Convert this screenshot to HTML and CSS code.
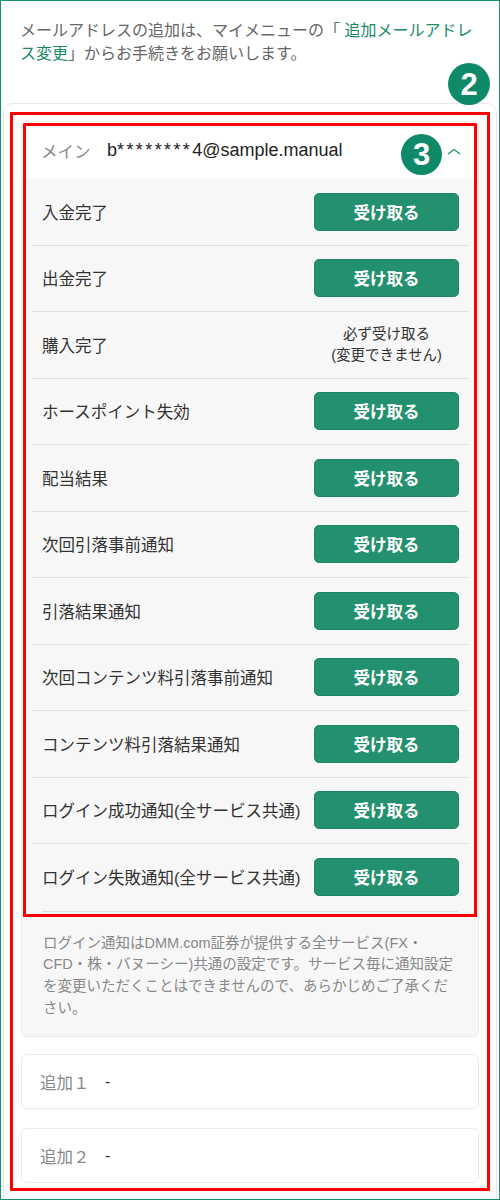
FILE: index.html
```html
<!DOCTYPE html>
<html lang="ja">
<head>
<meta charset="utf-8">
<title>メール通知設定</title>
<link rel="stylesheet" href="styles.css">
</head>
<body>
<div class="page">
  <p class="intro">メールアドレスの追加は、マイメニューの「 <a class="link" href="#">追加メールアドレス変更</a>」からお手続きをお願いします。</p>
  <div class="card">
    <span class="badge badge-2">2</span>
    <div class="frame">
      <div class="acc">
        <div class="acc-main">
          <div class="acc-head">
            <span class="acc-label">メイン</span>
            <span class="acc-mail">b<span class="stars">********</span>4@sample.manual</span>
            <span class="badge badge-3">3</span>
            <svg class="chevron" width="14" height="7" viewBox="0 0 14 7"><polyline points="1,6 7,1.5 13,6" fill="none" stroke="#1f8f6f" stroke-width="1.2"/></svg>
          </div>
          <ul class="rows">
            <li class="row"><span class="row-label">入金完了</span><span class="btn">受け取る</span></li>
            <li class="row"><span class="row-label">出金完了</span><span class="btn">受け取る</span></li>
            <li class="row"><span class="row-label">購入完了</span><span class="fixed">必ず受け取る<br>(変更できません)</span></li>
            <li class="row"><span class="row-label">ホースポイント失効</span><span class="btn">受け取る</span></li>
            <li class="row"><span class="row-label">配当結果</span><span class="btn">受け取る</span></li>
            <li class="row"><span class="row-label">次回引落事前通知</span><span class="btn">受け取る</span></li>
            <li class="row"><span class="row-label">引落結果通知</span><span class="btn">受け取る</span></li>
            <li class="row"><span class="row-label">次回コンテンツ料引落事前通知</span><span class="btn">受け取る</span></li>
            <li class="row"><span class="row-label">コンテンツ料引落結果通知</span><span class="btn">受け取る</span></li>
            <li class="row"><span class="row-label">ログイン成功通知(全サービス共通)</span><span class="btn">受け取る</span></li>
            <li class="row"><span class="row-label">ログイン失敗通知(全サービス共通)</span><span class="btn">受け取る</span></li>
          </ul>
        </div>
        <p class="note">ログイン通知はDMM.com証券が提供する全サービス(FX・CFD・株・バヌーシー)共通の設定です。サービス毎に通知設定を変更いただくことはできませんので、あらかじめご了承ください。</p>
      </div>
      <div class="sub"><span class="acc-label sub-label">追加１</span><span class="sub-value">-</span></div>
      <div class="sub sub-2"><span class="acc-label sub-label">追加２</span><span class="sub-value">-</span></div>
    </div>
  </div>
</div>
</body>
</html>
```

FILE: styles.css
```css
* { box-sizing: border-box; }

body {
  margin: 0;
  font-family: "Liberation Sans", "Noto Sans CJK JP", sans-serif;
  background: #fff;
}

.page {
  width: 500px;
  height: 1200px;
  border: 1px solid #12906f;
  overflow: hidden;
  background: #fff;
}

.intro {
  margin: 0;
  padding: 19px 19px 0;
  font-size: 16px;
  line-height: 22.5px;
  color: #666;
}

.link {
  color: #1a8a6a;
  text-decoration: none;
}

.card {
  position: relative;
  margin: 38px 2px 0;
  border: 1px solid #e8e8e8;
  border-radius: 10px;
  padding: 8px 6px 20px;
  background: #fff;
}

.badge {
  position: absolute;
  z-index: 3;
  display: flex;
  align-items: center;
  justify-content: center;
  width: 42px;
  height: 42px;
  border-radius: 50%;
  background: #0f8a68;
  color: #fff;
  font-family: "Liberation Sans", sans-serif;
  font-weight: bold;
  font-size: 31px;
  line-height: 1;
}

.badge-2 {
  top: -41px;
  right: 6px;
}

.badge-3 {
  top: 12px;
  left: 379px;
  width: 41px;
  height: 41px;
}

.frame {
  border: 3px solid #ff0000;
  padding: 6px 8px 5px;
}

.acc {
  border: 1px solid #ebebeb;
  border-radius: 6px;
  overflow: hidden;
  background: #f7f7f7;
}

.acc-main {
  position: relative;
}

.acc-main::after {
  content: "";
  position: absolute;
  left: 1px;
  right: 1px;
  top: 1px;
  bottom: -6px;
  border: 3px solid #ff0000;
  pointer-events: none;
  z-index: 2;
}

.acc-head {
  position: relative;
  display: flex;
  align-items: center;
  height: 57px;
  padding: 0 17px 0 19px;
  background: #fff;
}

.acc-label {
  width: 66px;
  flex: none;
  font-size: 16.5px;
  color: #888;
}

.acc-mail {
  flex: 1;
  font-size: 18px;
  color: #222;
}

.stars {
  letter-spacing: 2.4px;
}

.chevron {
  display: block;
  margin-top: 2px;
}

.rows {
  list-style: none;
  margin: 0;
  padding: 0 9px 0 10px;
}

.row {
  display: flex;
  align-items: center;
  justify-content: space-between;
  height: 66.5px;
  padding: 0 10px;
  border-bottom: 1px solid #dfdfdf;
}

.row:last-child {
  border-bottom: none;
}

.row-label {
  font-size: 16.5px;
  color: #333;
}

.btn {
  display: flex;
  align-items: center;
  justify-content: center;
  width: 145px;
  height: 38px;
  border: 1px solid #1b8565;
  border-radius: 5px;
  background: #23906f;
  color: #fff;
  font-weight: bold;
  font-size: 16.5px;
}

.fixed {
  width: 145px;
  text-align: center;
  font-size: 14.5px;
  line-height: 21px;
  color: #333;
}

.note {
  margin: 0 20px;
  border-top: 1px solid #e0e0e0;
  padding: 21px 0 17px 1px;
  font-size: 14.5px;
  line-height: 21.7px;
  color: #888;
}

.sub {
  display: flex;
  align-items: center;
  height: 55px;
  margin-top: 17px;
  padding-left: 18px;
  border: 1px solid #ebebeb;
  border-radius: 6px;
  background: #fff;
}

.sub-2 {
  margin-top: 19px;
}

.sub-label {
  width: 65px;
}

.sub-value {
  font-size: 16px;
  color: #333;
}
```
